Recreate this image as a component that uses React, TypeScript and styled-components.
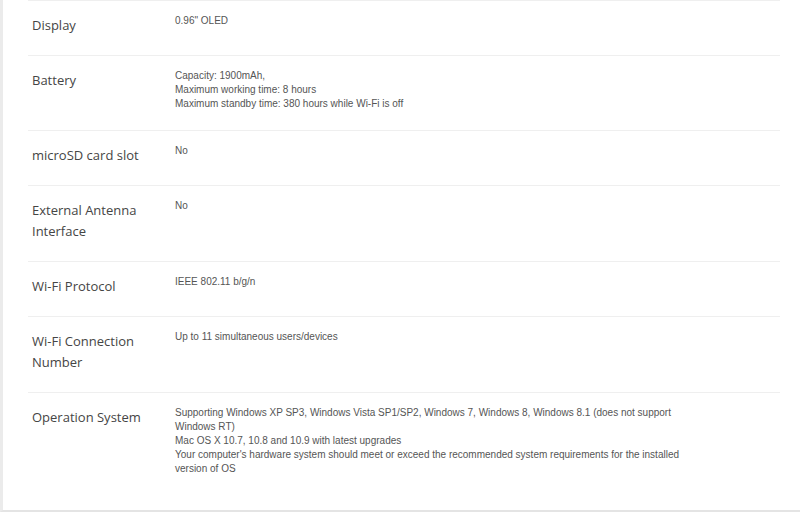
import React from 'react';
import styled, { createGlobalStyle } from 'styled-components';

interface SpecRow {
    label: string;
    lines: string[];
}

const specs: SpecRow[] = [
    { label: 'Display', lines: ['0.96" OLED'] },
    {
        label: 'Battery',
        lines: [
            'Capacity: 1900mAh,',
            'Maximum working time: 8 hours',
            'Maximum standby time: 380 hours while Wi-Fi is off',
        ],
    },
    { label: 'microSD card slot', lines: ['No'] },
    { label: 'External Antenna Interface', lines: ['No'] },
    { label: 'Wi-Fi Protocol', lines: ['IEEE 802.11 b/g/n'] },
    { label: 'Wi-Fi Connection Number', lines: ['Up to 11 simultaneous users/devices'] },
    {
        label: 'Operation System',
        lines: [
            'Supporting Windows XP SP3, Windows Vista SP1/SP2, Windows 7, Windows 8, Windows 8.1 (does not support Windows RT)',
            'Mac OS X 10.7, 10.8 and 10.9 with latest upgrades',
            "Your computer's hardware system should meet or exceed the recommended system requirements for the installed version of OS",
        ],
    },
];

const GlobalStyle = createGlobalStyle`
    html, body {
        margin: 0;
        padding: 0;
        background: #ffffff;
    }
`

const Panel = styled.div`
    width: 800px;
    height: 512px;
    box-sizing: border-box;
    border-left: 3px solid #ebebeb;
    border-bottom: 2px solid #e4e4e4;
    display: flex;
    flex-direction: column;
    background: #ffffff;
`

const SpecList = styled.div`
    margin-left: 25px;
    width: 752px;
    flex: 1;
    display: flex;
    flex-direction: column;
`

const Row = styled.div<{ $fill?: boolean }>`
    display: grid;
    grid-template-columns: 143px 1fr;
    align-items: start;
    padding: 13px 0 19px 4px;
    border-top: 1px solid #efefef;
    flex: ${p => (p.$fill ? 1 : 'none')};
`

const Label = styled.div`
    margin-top: 1px;
    font-family: "Open Sans", "DejaVu Sans", sans-serif;
    font-size: 13px;
    line-height: 21px;
    color: #454545;
    padding-right: 12px;
`

const Value = styled.div`
    max-width: 512px;
    font-family: "Liberation Sans", Arial, sans-serif;
    font-size: 10px;
    line-height: 14px;
    color: #555555;
`

const Line = styled.div`
    margin: 0;
`

const App: React.FC = () => {
    return (
        <>
            <GlobalStyle />
            <Panel>
                <SpecList>
                    {specs.map((s, i) => (
                        <Row key={s.label} $fill={i === specs.length - 1}>
                            <Label>{s.label}</Label>
                            <Value>
                                {s.lines.map(l => (
                                    <Line key={l}>{l}</Line>
                                ))}
                            </Value>
                        </Row>
                    ))}
                </SpecList>
            </Panel>
        </>
    )
}

export default App
